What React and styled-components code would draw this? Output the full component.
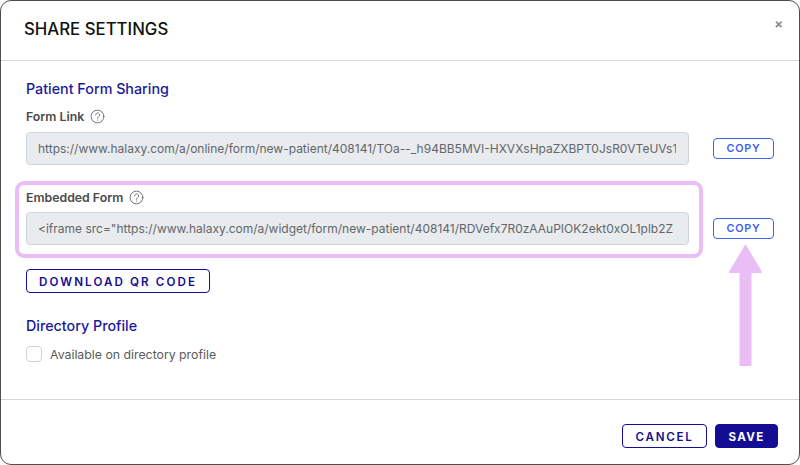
import React from "react";
import styled, { createGlobalStyle } from "styled-components";

const Global = createGlobalStyle`
  html, body { margin: 0; padding: 0; background: #fff; }
  body { font-family: Inter, "Liberation Sans", sans-serif; }
  * { box-sizing: border-box; }
`;

const Modal = styled.div`
  position: relative;
  width: 800px;
  height: 465px;
  border: 1px solid #4f4f4f;
  border-radius: 11px;
  background: #fff;
  display: flex;
  flex-direction: column;
  overflow: hidden;
`;

const Header = styled.header`
  height: 60px;
  flex: none;
  border-bottom: 1px solid #d3d6da;
  padding: 18px 16px 0 23px;
  display: flex;
  justify-content: space-between;
  align-items: flex-start;
`;

const Title = styled.h1`
  margin: 0;
  font-size: 16.8px;
  line-height: 20px;
  font-weight: 500;
  color: #111;
`;

const Close = styled.span`
  font-size: 13px;
  line-height: 13px;
  margin-top: -1px;
  color: #8d8d8d;
  font-weight: 700;
`;

const Body = styled.main`
  flex: 1;
  padding: 19px 25px 0 25px;
`;

const SectionTitle = styled.h2`
  margin: 0;
  font-size: 14.3px;
  line-height: 18px;
  font-weight: 500;
  color: #1a1a9c;
`;

const Label = styled.div`
  display: flex;
  align-items: center;
  gap: 6px;
  height: 18px;
  margin-top: ${(p) => p.$top}px;
  font-size: 12.3px;
  font-weight: 600;
  color: #4a4a4a;
`;

const Row = styled.div`
  display: flex;
  align-items: center;
  gap: 24px;
  margin-top: ${(p) => p.$top}px;
`;

const Field = styled.div`
  width: 663px;
  height: 33px;
  flex: none;
  border: 1px solid #ced4da;
  border-radius: 4px;
  background: #e9ecef;
  padding: 0 12px 0 11px;
`;

const FieldText = styled.div`
  font-size: 12px;
  line-height: 31px;
  color: #636669;
  white-space: nowrap;
  overflow: hidden;
`;

const CopyButton = styled.button`
  width: 61px;
  height: 21px;
  padding: 0;
  border: 1px solid #3f62f0;
  border-radius: 4px;
  background: #fff;
  color: #3f62f0;
  font: 600 10.8px Inter, "Liberation Sans", sans-serif;
  letter-spacing: 0.8px;
`;

const OutlineButton = styled.button`
  height: 24px;
  width: ${(p) => p.$w}px;
  padding: 1px 0 0;
  border: 1px solid #120d93;
  border-radius: 4px;
  background: #fff;
  color: #120d93;
  font: 600 11.6px Inter, "Liberation Sans", sans-serif;
  letter-spacing: ${(p) => p.$ls}px;
`;

const SolidButton = styled(OutlineButton)`
  background: #120d93;
  color: #fff;
  font-weight: 700;
`;

const QrWrap = styled.div`
  margin-top: 24px;
`;

const SecondTitle = styled(SectionTitle)`
  margin-top: 24px;
`;

const CheckRow = styled.label`
  display: flex;
  align-items: center;
  gap: 8px;
  margin-top: 11px;
  font-size: 12.3px;
  color: #5a5a5a;
`;

const Box = styled.span`
  width: 16px;
  height: 16px;
  flex: none;
  border: 1px solid #ced4da;
  border-radius: 4px;
  background: #fff;
`;

const Footer = styled.footer`
  height: 65px;
  flex: none;
  border-top: 1px solid #d3d6da;
  display: flex;
  justify-content: flex-end;
  align-items: flex-start;
  gap: 8px;
  padding: 24px 21px 0 0;
`;

const Highlight = styled.div`
  position: absolute;
  left: 14px;
  top: 180px;
  width: 688px;
  height: 77px;
  border: 4px solid #ebbdf7;
  border-radius: 9px;
  pointer-events: none;
`;

const Arrow = styled.svg`
  position: absolute;
  left: 726px;
  top: 242px;
  width: 36px;
  height: 126px;
`;

const Help = () => (
  <svg width="15" height="15" viewBox="0 0 15 15" fill="none" stroke="#666" strokeWidth="0.9" strokeLinecap="round">
    <circle cx="7.5" cy="7.5" r="6.4" />
    <path d="M5.6 5.9a2 2 0 1 1 3 1.8c-.7.4-1.1.8-1.1 1.6" />
    <path d="M7.5 11.1v.1" />
  </svg>
);

export default function App() {
  return (
    <>
      <Global />
      <Modal>
        <Header>
          <Title>SHARE SETTINGS</Title>
          <Close>×</Close>
        </Header>
        <Body>
          <SectionTitle>Patient Form Sharing</SectionTitle>
          <Label $top={9}>
            <span>Form Link</span>
            <Help />
          </Label>
          <Row $top={7}>
            <Field>
              <FieldText>https://www.halaxy.com/a/online/form/new-patient/408141/TOa--_h94BB5MVI-HXVXsHpaZXBPT0JsR0VTeUVs1</FieldText>
            </Field>
            <CopyButton>COPY</CopyButton>
          </Row>
          <Label $top={23}>
            <span>Embedded Form</span>
            <Help />
          </Label>
          <Row $top={6}>
            <Field>
              <FieldText>&lt;iframe src="https://www.halaxy.com/a/widget/form/new-patient/408141/RDVefx7R0zAAuPIOK2ekt0xOL1plb2Z</FieldText>
            </Field>
            <CopyButton>COPY</CopyButton>
          </Row>
          <QrWrap>
            <OutlineButton $w={184} $ls={2.1}>DOWNLOAD QR CODE</OutlineButton>
          </QrWrap>
          <SecondTitle>Directory Profile</SecondTitle>
          <CheckRow>
            <Box />
            Available on directory profile
          </CheckRow>
        </Body>
        <Footer>
          <OutlineButton $w={85} $ls={1.7}>CANCEL</OutlineButton>
          <SolidButton $w={63} $ls={1.3}>SAVE</SolidButton>
        </Footer>
        <Highlight />
        <Arrow viewBox="0 0 36 126" aria-hidden="true">
          <path d="M18.5 3 L34 29 H23.5 V122 H13.5 V29 H3 Z" fill="#ebbdf7" stroke="#ebbdf7" strokeWidth="2" strokeLinejoin="round" />
        </Arrow>
      </Modal>
    </>
  );
}
